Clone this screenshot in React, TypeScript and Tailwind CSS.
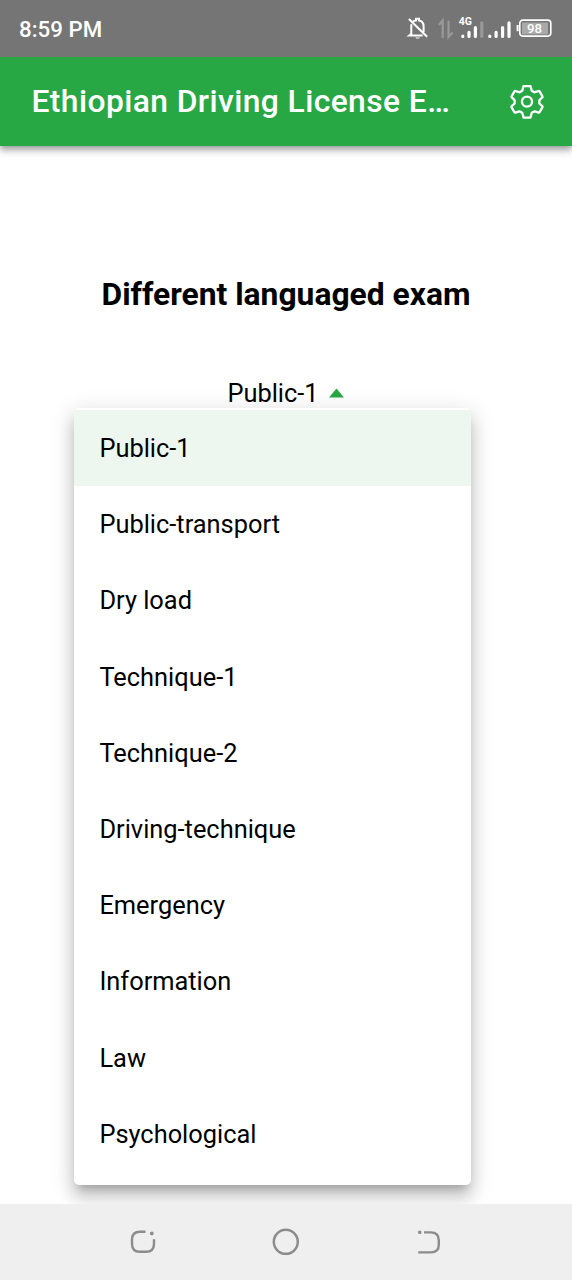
import React, { useState } from 'react'

const exams = [
  'Public-1',
  'Public-transport',
  'Dry load',
  'Technique-1',
  'Technique-2',
  'Driving-technique',
  'Emergency',
  'Information',
  'Law',
  'Psychological',
]

function StatusIcons() {
  return (
    <svg width="152" height="30" viewBox="0 0 152 30" fill="none" className="block">
      {/* muted bell */}
      <g stroke="#fff" strokeWidth="2">
        <path d="M12.8 6.6c1-.7 2-1 3.2-1.1V3.8h3v1.7c3 .5 4.6 3 4.6 5.8v6" />
        <path d="M11.3 9.3v9.5l-2 1.6h13.3" />
        <path d="M8.9 4l18.2 17.8" />
      </g>
      <path d="M15.4 22.4h4.4c-.4 1.6-4 1.6-4.4 0z" fill="#fff" />
      {/* data arrows */}
      <g stroke="#999" strokeWidth="2.2">
        <path d="M42.7 23V5.5L38.8 10" />
        <path d="M48.5 5.5V22l4.1-4.5" />
      </g>
      {/* first sim */}
      <g strokeWidth="3.2" strokeLinecap="round">
        <path d="M62.8 21.2v.2M69 17.4v4M75.4 12.6v8.8" stroke="#fff" />
        <path d="M81.8 7.8v13.6" stroke="#999" />
      </g>
      {/* second sim */}
      <path d="M89.8 21.2v.2M96.1 17.4v4M102.6 12.6v8.8M109 7.8v13.6" stroke="#fff" strokeWidth="3.2" strokeLinecap="round" />
      <text x="58.8" y="9.6" fontSize="10.5" fontWeight="700" fill="#fff" className="font-[Roboto,sans-serif]">4G</text>
      {/* battery */}
      <rect x="122" y="7.6" width="26" height="12" rx="1" fill="#a9a9a9" />
      <rect x="119.8" y="5.1" width="31" height="16" rx="3" stroke="#fff" strokeWidth="1.6" />
      <path d="M117.6 10v6.2" stroke="#fff" strokeWidth="2" />
      <text x="134.6" y="17.8" fontSize="13.2" fontWeight="500" textAnchor="middle" fill="#fff" className="font-[Roboto,sans-serif]">98</text>
    </svg>
  )
}

function SettingsIcon() {
  return (
    <svg width="36" height="36" viewBox="-0.3 -0.3 37 37" fill="none" stroke="#fff" strokeWidth="2.4" strokeLinejoin="round">
      <path d="M14.6 1.8h7.2l1.1 4.4q.1.5.6.7l1.9 1.1q.4.3.9.1l3.8-1.2q.7-.2 1 .4l2.9 5q.4.7-.1 1.2l-2.7 2.5q-.4.3-.3.8v2.4q-.1.5.3.8l2.7 2.5q.5.5.1 1.2l-2.9 5q-.3.6-1 .4l-3.8-1.2q-.5-.2-.9.1l-1.9 1.1q-.5.2-.6.7l-1.1 4.4h-7.2l-1.1-4.4q-.1-.5-.6-.7L11 28q-.4-.3-.9-.1l-3.8 1.2q-.7.2-1-.4l-2.9-5q-.4-.7.1-1.2L5.2 20q.4-.3.3-.8v-2.4q.1-.5-.3-.8l-2.7-2.5q-.5-.5-.1-1.2l2.9-5q.3-.6 1-.4l3.8 1.2q.5.2.9-.1l1.9-1.1q.5-.2.6-.7z" />
      <circle cx="18.2" cy="17.8" r="5.2" />
    </svg>
  )
}

function NavBar() {
  return (
    <nav className="relative z-20 flex h-[76px] shrink-0 items-center justify-between bg-[#efefef] px-[129px] text-[#8c8c8c]">
      <svg width="28" height="28" viewBox="0 0 28 28" fill="none" stroke="currentColor" strokeWidth="2.4">
        <path d="M16.5 3.8H11q-8 0-8 8v4q0 8 8 8h6q8 0 8-8v-4.5" />
        <circle cx="22.8" cy="5.4" r="1.9" fill="currentColor" stroke="none" />
      </svg>
      <svg width="28" height="28" viewBox="0 0 28 28" fill="none" stroke="currentColor" strokeWidth="2.5">
        <circle cx="13.8" cy="13.8" r="12" />
      </svg>
      <svg width="28" height="28" viewBox="0 0 28 28" fill="none" stroke="currentColor" strokeWidth="2.4">
        <path d="M9 4.4h6.8q8 0 8 8v4q0 8-8 8H3.2" />
        <rect x="3.2" y="2.8" width="3.2" height="3.2" rx=".8" fill="currentColor" stroke="none" />
      </svg>
    </nav>
  )
}

export default function App() {
  const [selected, setSelected] = useState('Public-1')

  return (
    <div className="flex h-[1280px] w-[572px] flex-col overflow-hidden bg-white font-[Roboto,sans-serif] text-black">
      <div className="relative z-10 flex h-[57px] shrink-0 items-center justify-between bg-[#757575] pl-[19px] pr-[20px] pt-[2px] text-white">
        <span className="text-[22.3px] font-medium">8:59 PM</span>
        <StatusIcons />
      </div>

      <header className="flex h-[89px] shrink-0 items-center justify-between bg-[#28a745] pl-[31.5px] pr-[27px] text-white shadow-[0_3px_6px_rgba(0,0,0,0.3),0_6px_8px_rgba(0,0,0,0.12)]">
        <h1 className="pb-[2px] text-[31.8px] leading-[40px] font-medium tracking-[0.41px] whitespace-nowrap">
          Ethiopian Driving License E…
        </h1>
        <button aria-label="Settings">
          <SettingsIcon />
        </button>
      </header>

      <main className="flex flex-1 flex-col items-center pt-[128px]">
        <h2 className="text-[31.8px] leading-[40px] font-bold">Different languaged exam</h2>

        <div className="relative mt-[59px] flex w-full justify-center">
          <button className="flex items-center gap-[10px] pr-[1px] text-[25.4px] leading-[40px]">
            {selected}
            <svg width="15" height="10" viewBox="0 0 15 10">
              <path d="M0 9.5L7.5 .5l7.500 9z" fill="#28a745" />
            </svg>
          </button>

          <ul className="absolute left-[74px] top-[35px] z-10 h-[777px] w-[397px] rounded-[5px] bg-white pt-[2px] shadow-[0_8px_8px_-5px_rgba(0,0,0,0.2),0_13px_16px_1px_rgba(0,0,0,0.14),0_5px_22px_3px_rgba(0,0,0,0.12)]">
            {exams.map((exam) => (
              <li
                key={exam}
                onClick={() => setSelected(exam)}
                className={`flex h-[76.2px] items-center px-[25.4px] text-[25.4px] ${
                  exam === selected ? 'bg-[#edf7f0]' : ''
                }`}
              >
                {exam}
              </li>
            ))}
          </ul>
        </div>
      </main>

      <NavBar />
    </div>
  )
}
